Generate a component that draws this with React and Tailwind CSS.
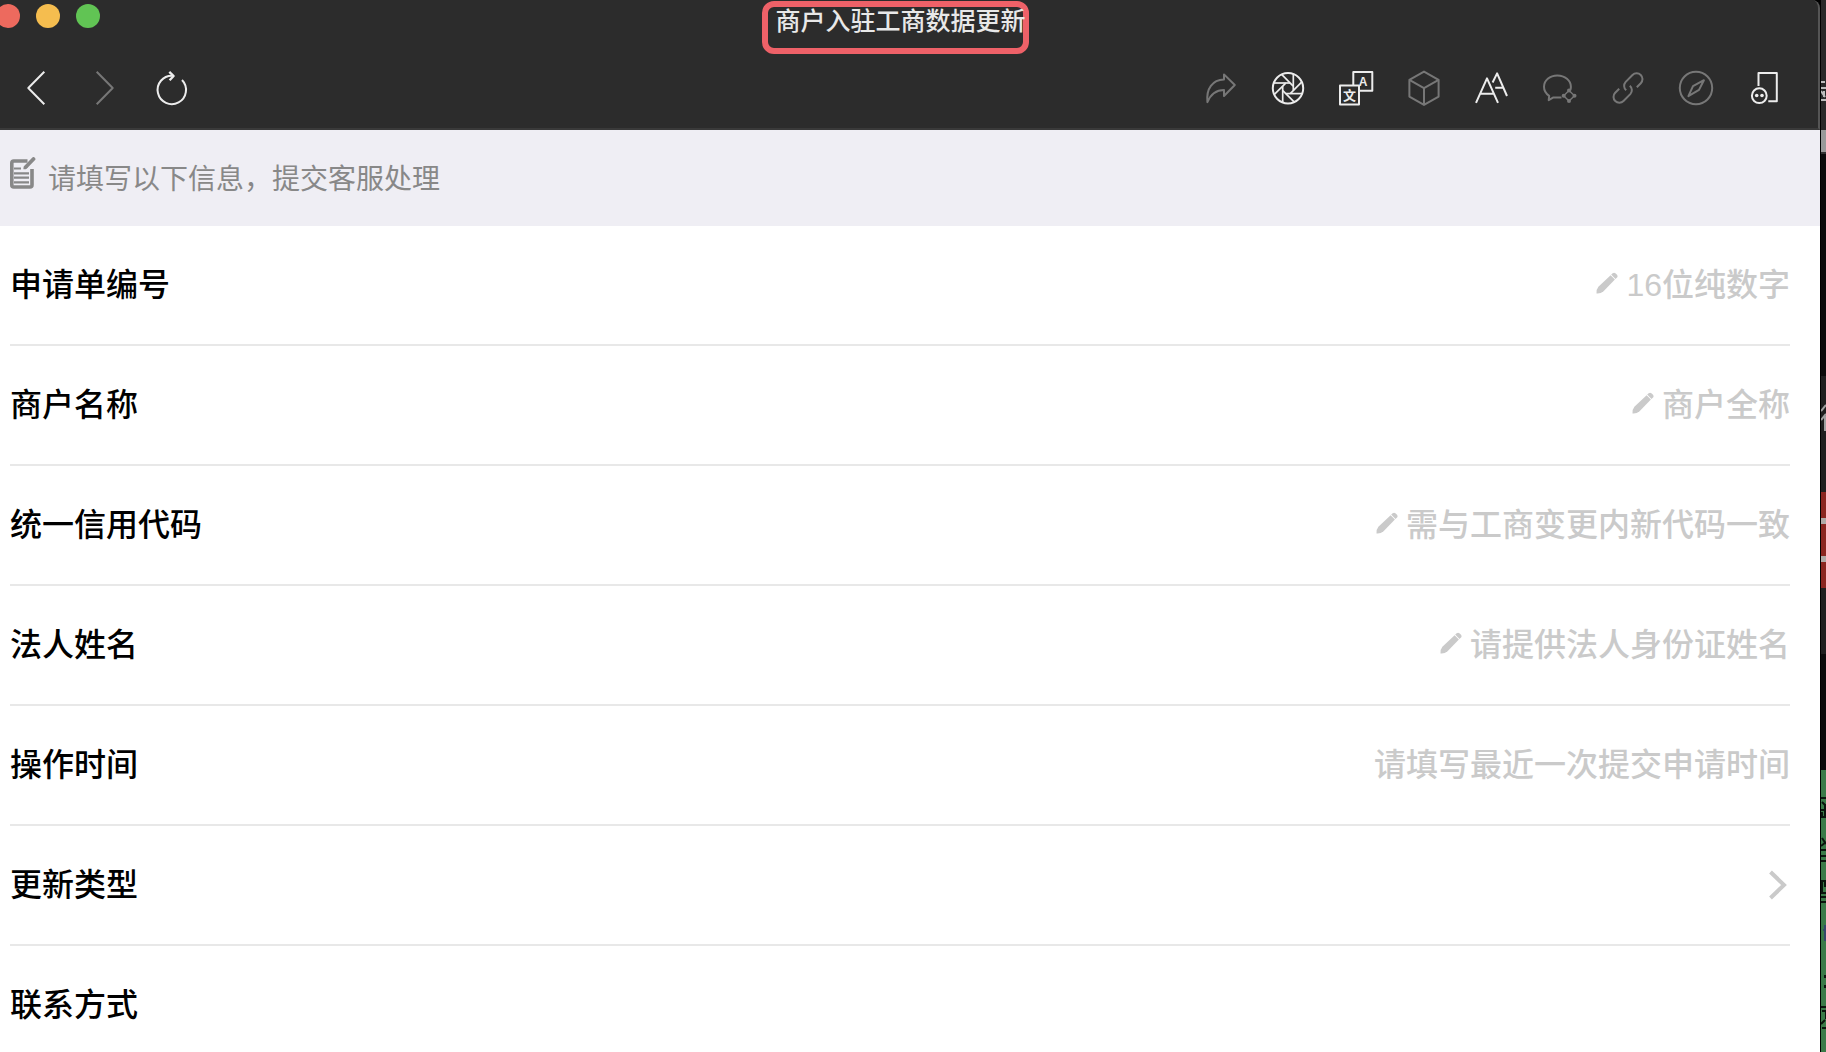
import { useState } from 'react'

const fields = [
  { id: 'applyNo', label: '申请单编号', placeholder: '16位纯数字', pencil: true },
  { id: 'merchantName', label: '商户名称', placeholder: '商户全称', pencil: true },
  { id: 'creditCode', label: '统一信用代码', placeholder: '需与工商变更内新代码一致', pencil: true },
  { id: 'legalName', label: '法人姓名', placeholder: '请提供法人身份证姓名', pencil: true },
  { id: 'operateTime', label: '操作时间', placeholder: '请填写最近一次提交申请时间' },
  { id: 'updateType', label: '更新类型', type: 'select' },
  { id: 'contact', label: '联系方式', placeholder: '' },
]

const blades = [0, 45, 90, 135, 180, 225, 270, 315]

function ToolButton({ label, dim, children }) {
  return (
    <button
      type="button"
      aria-label={label}
      className={`flex h-full w-17 items-center justify-center ${dim ? 'text-[#777777]' : 'text-[#ececec]'}`}
    >
      <svg width="40" height="40" viewBox="0 0 40 40" fill="none" stroke="currentColor" strokeWidth="2" strokeLinejoin="round">
        {children}
      </svg>
    </button>
  )
}

function Toolbar() {
  return (
    <div className="flex h-20 items-center justify-between pr-5 pl-0.5">
      <div className="flex h-full">
        <ToolButton label="后退">
          <path d="M28.3 3.8 12.3 20l16 16.2" />
        </ToolButton>
        <ToolButton label="前进" dim>
          <path d="M12.7 3.8l16 16.2-16 16.2" />
        </ToolButton>
        <ToolButton label="刷新">
          <path d="M30 12A14.2 14.2 0 1 1 20.5 7.7" />
          <path d="M17.3 3.8 21.6 8l-4 4.3" strokeWidth="2.4" />
        </ToolButton>
      </div>
      <div className="flex h-full">
        <ToolButton label="转发" dim>
          <path d="M24 6.4 34.8 17 24 28v-6c-8.500 0-13.200 4-16.600 12.200C6 20.500 12.500 11.800 24 11.500z" />
        </ToolButton>
        <ToolButton label="小程序">
          <circle cx="20" cy="20.300" r="15.200" />
          {blades.map((deg) => (
            <path key={deg} d="M25.300 6v16.400" strokeWidth="1.700" transform={`rotate(${deg} 20 20.300)`} />
          ))}
        </ToolButton>
        <ToolButton label="翻译">
          <path d="M17.300 17V4h19v18.700H23.300" />
          <path d="M4 17.500h19v19H4z" />
          <text x="27" y="17.600" fontSize="12" fontWeight="700" textAnchor="middle" fill="currentColor" stroke="none">A</text>
          <text x="13.500" y="31.500" fontSize="13" fontWeight="700" textAnchor="middle" fill="currentColor" stroke="none">文</text>
        </ToolButton>
        <ToolButton label="收藏" dim>
          <path d="M20 3.600 34.600 11.900V28.600L20 36.900 5.400 28.600V11.900z" />
          <path d="M5.400 11.900 20 20.200l14.600-8.300M20 20.200v16.700" />
        </ToolButton>
        <ToolButton label="字体大小">
          <path d="M4 34.900 15 10.300l11 24.600M8.200 25.700h13.600" />
          <path d="M20.600 14.500 25.100 5.400 35 28M23.200 19.800h8.400" />
        </ToolButton>
        <ToolButton label="提问" dim>
          <path d="M30.300 22.200c.4-1.200.6-2.300.6-3.500 0-6.300-6-11.300-13.600-11.300S4 12.400 4 18.700c0 3.800 2 7 5.200 9.100l-.5 4.400 4.300-2.600h8.500" />
          <path d="M29 22.500l5.500 5.200L29 33l-5.300-5.300z" strokeWidth="1.400" />
          <g fill="currentColor" stroke="none">
            <circle cx="29" cy="22.500" r="2" />
            <circle cx="34.500" cy="27.700" r="2" />
            <circle cx="29" cy="33" r="2" />
            <circle cx="23.700" cy="27.700" r="2" />
          </g>
        </ToolButton>
        <ToolButton label="复制链接" dim>
          <path d="M28.800 19.200l4-4a5.800 5.800 0 0 0-8.300-8.200L17.700 13.900a5.800 5.800 0 0 0 .5 8.400" />
          <path d="M11.200 20.800l-4 4a5.800 5.800 0 0 0 8.300 8.200l6.800-6.900a5.800 5.800 0 0 0-.5-8.400" />
        </ToolButton>
        <ToolButton label="浏览器打开" dim>
          <circle cx="20" cy="20" r="16.200" />
          <path d="M27.900 12.200 23 21.900l-10.600 6.200 4.600-9.900z" />
        </ToolButton>
        <ToolButton label="侧边栏">
          <path d="M14.500 18V4.900h18.300v28.300H24.300" />
          <circle cx="15.300" cy="27.700" r="7.400" />
          <circle cx="12.700" cy="27.500" r="1.800" fill="currentColor" stroke="none" />
          <circle cx="18" cy="27.500" r="1.800" fill="currentColor" stroke="none" />
        </ToolButton>
      </div>
    </div>
  )
}

function NoteIcon() {
  return (
    <svg width="26" height="32" viewBox="0 0 26 32" fill="none" stroke="#888888" className="mb-2.5 shrink-0">
      <path d="M17.500 4H3.800q-2 0-2 2v22q0 2 2 2h16.200q2 0 2-2V12" strokeWidth="3.600" />
      <path d="M4 11.500h7M4 16.300h15M4 20.700h15M4 25.300h15" strokeWidth="2.200" />
      <path d="M23.500 2 15.500 10.300" strokeWidth="3.800" strokeLinecap="round" />
      <path d="M15.500 8.500l1.800 1.800-3.500 1.700z" fill="#888888" strokeWidth="1" />
    </svg>
  )
}

function PencilIcon() {
  return (
    <svg width="22" height="22" viewBox="0 0 22 22" fill="#cacaca" className="shrink-0">
      <path d="M.500 21.500q-.4-4 1.900-6.700L14.600 3.200l4.300 4.300L7.300 19.400q-2.700 2.500-6.800 2.100z" />
      <path d="M15.200 2.600l1.500-1.400q1.400-1.100 2.700 0l1.600 1.600q1.100 1.400 0 2.700l-1.500 1.400z" />
    </svg>
  )
}

function FieldRow({ field, value, onChange }) {
  return (
    <div className="flex h-30 items-center justify-between border-b-2 border-[#e8e8e8]">
      <label htmlFor={field.id} className="text-[32px] leading-12 font-medium text-black">{field.label}</label>
      {field.type === 'select' ? (
        <div className="flex items-center">
          <select id={field.id} value={value} onChange={onChange} className="w-40 appearance-none bg-transparent text-[32px] leading-12 outline-none">
            <option value=""></option>
          </select>
          <svg width="24" height="32" viewBox="0 0 24 32" fill="none" stroke="#cacaca" strokeWidth="4">
            <path d="M4.500 3 18 16 4.500 29" />
          </svg>
        </div>
      ) : (
        <div className="flex items-center gap-2 pb-1">
          {field.pencil && <PencilIcon />}
          <input
            id={field.id}
            type="text"
            value={value}
            onChange={onChange}
            placeholder={field.placeholder}
            className="field-sizing-content p-0 text-right text-[32px] leading-12 font-medium text-black outline-none placeholder:text-[#cacaca]"
          />
        </div>
      )}
    </div>
  )
}

// sliver of the desktop visible beside the window
function Backdrop() {
  return (
    <div className="flex w-1.5 shrink-0 flex-col border-l border-black bg-[#0b0b0b]">
      <div className="h-[130px] bg-[#292929] pt-20">
        <svg width="5" height="24" viewBox="0 0 5 24" fill="none" stroke="#bdbdbd" strokeWidth="2">
          <path d="M0 2h4M0 8h5M0 20h5M0 11l4 6M3 11v6" />
        </svg>
      </div>
      <div className="h-6 border-b-2 border-[#333333] bg-[#999999]" />
      <div className="h-[222px]" />
      <div className="h-[116px] bg-[#1f1f1f] pt-7">
        <svg width="5" height="28" viewBox="0 0 5 28" fill="none" stroke="#a0a0a0" strokeWidth="2">
          <path d="M0 7 5 1M0 16l5-6M4 12v15" />
        </svg>
      </div>
      <div className="flex h-24 flex-col justify-center gap-8 bg-[#8b2520]">
        <div className="h-1.5 bg-[#b0aaa8]" />
        <div className="h-1.5 bg-[#b0aaa8]" />
      </div>
      <div className="h-[66px] bg-[#1f1f1f]" />
      <div className="h-[116px]" />
      <div className="grow bg-[#3b7a48]">
        <svg width="5" height="282" viewBox="0 0 5 282" fill="none" stroke="#0b150d" strokeWidth="2">
          <path d="M0 28h5M1 32l4 4M0 40h5M1 42v5h4M4 34v12" />
          <path d="M1 68l4 6M0 76l5-4M0 80h5M0 86h5M0 91h5" />
          <path d="M0 111h4v6M1 111v12h4M0 127h5M0 132h5" />
          <path d="M2 160h3M4 155v16" stroke="#34496a" />
          <path d="M4 205v3M4 215v3M0 237h5M1 241h4v8M0 254l4-4M1 258h4" />
        </svg>
      </div>
    </div>
  )
}

function App() {
  const [values, setValues] = useState({})

  return (
    <div className="flex h-screen overflow-hidden bg-black font-['Liberation_Sans','Noto_Sans_CJK_SC',sans-serif]">
      <div className="flex min-w-0 flex-1 flex-col">
        <header className="shrink-0 rounded-tr-lg border-r-2 border-b-2 border-r-[#555555] border-b-[#3a3a3a] bg-[#2c2c2c]">
          <div className="flex h-12">
            <div className="-ml-1 flex w-26 shrink-0 gap-4 pt-1">
              <button type="button" aria-label="关闭" className="size-6 shrink-0 rounded-full bg-[#ed6a5e]" />
              <button type="button" aria-label="最小化" className="size-6 shrink-0 rounded-full bg-[#f5bd4f]" />
              <button type="button" aria-label="全屏" className="size-6 shrink-0 rounded-full bg-[#61c454]" />
            </div>
            <div className="flex grow justify-center pt-px pr-32">
              <h1 className="h-[53px] w-[267px] rounded-xl border-6 border-[#ee6168] pl-2 text-[25px] leading-7 font-medium whitespace-nowrap text-[#e8e8e8]">
                商户入驻工商数据更新
              </h1>
            </div>
          </div>
          <Toolbar />
        </header>

        <main className="grow bg-white">
          <div className="flex h-24 items-center gap-3 bg-[#efeef4] px-2.5">
            <NoteIcon />
            <p className="pt-1 text-[28px] leading-10 text-[#888888]">请填写以下信息，提交客服处理</p>
          </div>
          <form className="pr-7.5 pl-2.5">
            {fields.map((field) => (
              <FieldRow
                key={field.id}
                field={field}
                value={values[field.id] ?? ''}
                onChange={(event) => setValues({ ...values, [field.id]: event.target.value })}
              />
            ))}
          </form>
        </main>
      </div>
      <Backdrop />
    </div>
  )
}

export default App
